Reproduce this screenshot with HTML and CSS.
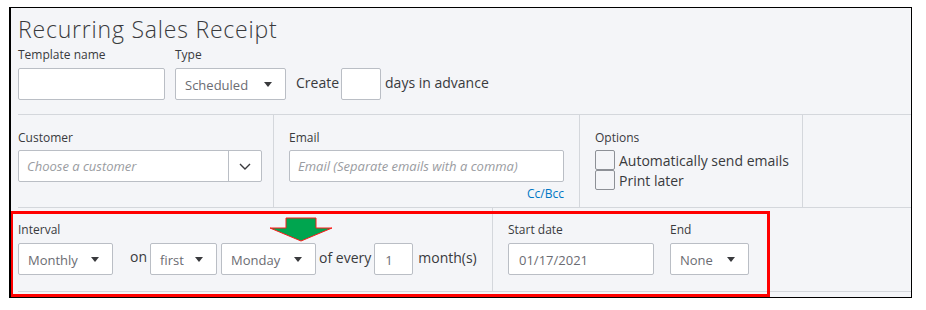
FILE: index.html
```html
<!DOCTYPE html>
<html>
<head>
<meta charset="utf-8">
<link rel="stylesheet" href="styles.css">
</head>
<body>
<div class="frame">
  <section class="top">
    <h1 class="title">Recurring Sales Receipt</h1>
    <div class="row-fields">
      <div class="field">
        <label class="lbl">Template name</label>
        <div class="input w-template"></div>
      </div>
      <div class="field">
        <label class="lbl">Type</label>
        <div class="select w-type"><span>Scheduled</span><svg class="caret" viewBox="0 0 8 5" width="8" height="5"><path d="M0 0H8L4 5Z"/></svg></div>
      </div>
      <div class="inline-text create">Create</div>
      <div class="input w-days"></div>
      <div class="inline-text days">days in advance</div>
    </div>
  </section>

  <section class="mid">
    <div class="col col-customer">
      <label class="lbl">Customer</label>
      <div class="combo">
        <span class="ph">Choose a customer</span>
        <span class="combo-btn"><svg viewBox="0 0 12 7" width="12" height="7"><path d="M1 1L6 6L11 1" fill="none" stroke="#393a3d" stroke-width="1.4"/></svg></span>
      </div>
    </div>
    <div class="col col-email">
      <label class="lbl">Email</label>
      <div class="input w-email"><span class="ph">Email (Separate emails with a comma)</span></div>
      <div class="ccbcc">Cc/Bcc</div>
    </div>
    <div class="col col-options">
      <label class="lbl">Options</label>
      <div class="check-row"><span class="box"></span><span class="check-text">Automatically send emails</span></div>
      <div class="check-row second"><span class="box"></span><span class="check-text">Print later</span></div>
    </div>
    <div class="col col-rest"></div>
  </section>

  <section class="sched">
    <div class="col col-interval">
      <label class="lbl">Interval</label>
      <div class="ctrl-row">
        <div class="select w-interval"><span>Monthly</span><svg class="caret" viewBox="0 0 8 5" width="8" height="5"><path d="M0 0H8L4 5Z"/></svg></div>
        <span class="word on">on</span>
        <div class="select w-first"><span>first</span><svg class="caret" viewBox="0 0 8 5" width="8" height="5"><path d="M0 0H8L4 5Z"/></svg></div>
        <div class="select w-day"><span>Monday</span><svg class="caret" viewBox="0 0 8 5" width="8" height="5"><path d="M0 0H8L4 5Z"/></svg></div>
        <span class="word every">of every</span>
        <div class="input w-every"><span class="val">1</span></div>
        <span class="word months">month(s)</span>
      </div>
    </div>
    <div class="col col-dates">
      <div class="field">
        <label class="lbl">Start date</label>
        <div class="input w-start"><span class="val">01/17/2021</span></div>
      </div>
      <div class="field">
        <label class="lbl">End</label>
        <div class="select w-end"><span>None</span><svg class="caret" viewBox="0 0 8 5" width="8" height="5"><path d="M0 0H8L4 5Z"/></svg></div>
      </div>
    </div>
    <div class="col col-rest"></div>
  </section>

  <div class="red-box"></div>
  <svg class="green-arrow" viewBox="0 0 66 28" width="66" height="28"><polygon points="18,2 48,2 48,12 64,12 33,25 2,12 18,12" fill="#00a54f" stroke="#ff1a1a" stroke-width="1"/></svg>
</div>
</body>
</html>
```

FILE: styles.css
```css
* { box-sizing: border-box; }
html, body { margin: 0; padding: 0; background: #fff; }
body {
  font-family: "Open Sans", "Liberation Sans", sans-serif;
  color: #393a3d;
}
.frame {
  position: relative;
  margin: 7px 0 0 9px;
  width: 903px;
  height: 291px;
  border: 1px solid #000;
  border-left-width: 2px;
  background: #f4f5f8;
  overflow: hidden;
}
.top {
  margin-left: 7px;
  height: 107px;
  border-bottom: 1px solid #d4d7dc;
}
.title {
  margin: 0;
  padding-top: 6px;
  font-size: 23px;
  line-height: 30px;
  font-weight: 300;
  color: #393a3d;
  letter-spacing: 0.8px;
}
.row-fields {
  display: flex;
  align-items: flex-end;
  margin-top: 3px;
}
.field { display: flex; flex-direction: column; margin-right: 10px; }
.lbl {
  display: block;
  font-size: 12px;
  line-height: 16px;
  font-weight: 500;
  color: #393a3d;
  margin-bottom: 5px;
}
.input {
  height: 32px;
  background: #fff;
  border: 1px solid #babec5;
  border-radius: 2px;
  display: flex;
  align-items: center;
  padding: 0 10px;
  font-size: 13px;
}
.select {
  height: 32px;
  background: #fff;
  border: 1px solid #babec5;
  border-radius: 2px;
  display: flex;
  align-items: center;
  justify-content: space-between;
  padding: 0 13px 0 9px;
  font-size: 13px;
  color: #6b6c72;
}
.select span { padding-top: 2px; }
.caret { fill: #393a3d; flex: none; }
.w-template { width: 147px; }
.w-type { width: 111px; }
.w-days { width: 40px; }
.inline-text {
  height: 32px;
  display: flex;
  align-items: center;
  font-size: 14px;
  color: #393a3d;
  padding-bottom: 3px;
}
.create { margin-right: 2px; }
.days { margin-left: 4px; }

.mid {
  margin-left: 7px;
  height: 93px;
  border-bottom: 1px solid #d4d7dc;
  display: flex;
}
.col { height: 100%; }
.mid .col { padding-top: 15px; }
.col-customer { width: 256px; border-right: 1px solid #d4d7dc; }
.col-email { width: 306px; border-right: 1px solid #d4d7dc; padding-left: 15px; }
.col-options { width: 223px; border-right: 1px solid #d4d7dc; padding-left: 15px; }
.col-rest { flex: 1; }
.mid .lbl { font-size: 12px; margin-bottom: 4px; }
.combo {
  width: 244px;
  height: 32px;
  background: #fff;
  border: 1px solid #babec5;
  border-radius: 2px;
  display: flex;
  align-items: center;
}
.combo .ph { flex: 1; padding-left: 8px; }
.ph {
  font-style: italic;
  font-size: 13px;
  color: #9a9ca1;
}
.combo-btn {
  width: 33px;
  height: 100%;
  border-left: 1px solid #babec5;
  display: flex;
  align-items: center;
  justify-content: center;
}
.w-email { width: 275px; padding-left: 8px; }
.ccbcc {
  width: 275px;
  text-align: right;
  font-size: 12px;
  font-weight: 500;
  color: #0077c5;
  margin-top: 4px;
  line-height: 16px;
}
.col-options .lbl { margin-bottom: 4px; }
.check-row { display: flex; align-items: center; height: 20px; }
.box {
  width: 20px;
  height: 20px;
  background: #f4f5f8;
  border: 1px solid #8d9096;
  border-radius: 2px;
  margin-right: 4px;
}
.check-text { font-size: 14px; color: #393a3d; }

.sched {
  margin-left: 7px;
  height: 84px;
  border-bottom: 1px solid #d4d7dc;
  display: flex;
}
.sched .col { padding-top: 14px; }
.col-interval { width: 475px; border-right: 1px solid #d4d7dc; }
.col-dates { display: flex; padding-left: 15px; width: 277px; }
.col-dates .field { margin-right: 16px; }
.sched .lbl { margin-bottom: 5px; }
.ctrl-row { display: flex; align-items: center; }
.word { font-size: 14px; color: #393a3d; }
.on { margin: 0 3px 0 17px; padding-bottom: 5px; }
.every { margin: 0 3px 0 3px; padding-bottom: 3px; }
.months { margin-left: 5px; padding-bottom: 3px; }
.w-interval { width: 95px; }
.w-first { width: 67px; }
.w-day { width: 95px; margin-left: 4px; }
.w-every { width: 39px; }
.w-start { width: 146px; }
.w-end { width: 79px; }
.val { color: #6b6c72; font-size: 13px; padding-top: 2px; }

.red-box {
  position: absolute;
  left: -1px;
  top: 203px;
  width: 760px;
  height: 86px;
  border: 3px solid #ff0000;
}
.green-arrow {
  position: absolute;
  left: 257px;
  top: 208px;
}
```
